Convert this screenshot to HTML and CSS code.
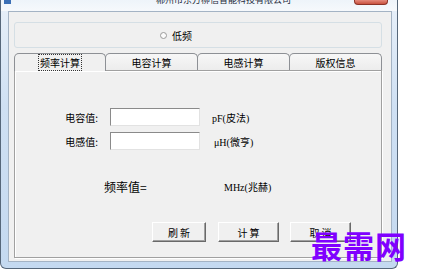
FILE: index.html
```html
<!DOCTYPE html>
<html lang="zh-CN">
<head>
    <meta charset="UTF-8">
    <title>频率计算</title>
    <link rel="stylesheet" href="styles.css">
</head>
<body>
    <div class="window">
        <div class="titlebar">
            <span class="app-icon"></span>
            <span class="title">郴州市东方柳信智能科技有限公司</span>
            <span class="close"></span>
        </div>
        <div class="client">
            <div class="group">
                <label class="radio"><span class="dot"></span>低频</label>
            </div>
            <div class="tabs">
                <div class="tab active"><span class="focus">频率计算</span></div>
                <div class="tab">电容计算</div>
                <div class="tab">电感计算</div>
                <div class="tab">版权信息</div>
            </div>
            <div class="panel">
                <div class="row">
                    <span class="label">电容值:</span>
                    <input type="text" class="field">
                    <span class="unit">pF(皮法)</span>
                </div>
                <div class="row second">
                    <span class="label">电感值:</span>
                    <input type="text" class="field">
                    <span class="unit mu">μH(微亨)</span>
                </div>
                <div class="result">
                    <span class="freq">频率值=</span>
                    <span class="unit">MHz(兆赫)</span>
                </div>
                <div class="buttons">
                    <button class="btn refresh">刷 新</button>
                    <button class="btn calc">计 算</button>
                    <button class="btn cancel">取 消</button>
                </div>
            </div>
        </div>
    </div>
    <div class="watermark">最需网</div>
</body>
</html>
```

FILE: styles.css
```css
body {
    margin: 0;
    background: #fff;
    font-family: "Noto Sans CJK SC", sans-serif;
    font-size: 10px;
    color: #000;
}
.window {
    width: 398px;
    height: 269px;
    box-sizing: border-box;
    display: flex;
    flex-direction: column;
    padding: 0 5px 6px 7px;
    background: linear-gradient(to bottom, #e8f0f9, #cfe0f3 40%, #c4d9f0);
    border: 1px solid #56677a;
    border-top: none;
    border-radius: 0 0 6px 6px;
}
.titlebar {
    height: 11px;
    margin: 0 -5px 0 -7px;
    display: flex;
    align-items: flex-start;
    overflow: hidden;
    background: linear-gradient(to bottom, #eef4fa, #f6f9fc);
}
.app-icon {
    width: 7px;
    height: 4px;
    margin-left: 3px;
    background: #3b6fb5;
}
.title {
    margin-left: 145px;
    margin-top: -5px;
    font-size: 9px;
    line-height: 9px;
    color: #1e2a3a;
    white-space: nowrap;
}
.close {
    margin-left: auto;
    margin-right: 9px;
    width: 34px;
    height: 5px;
    box-sizing: border-box;
    background: linear-gradient(to bottom, #e58a7c, #c9523f);
    border: 1px solid #8c3327;
    border-top: none;
    border-radius: 0 0 4px 4px;
}
.client {
    flex: 1;
    background: #f0f0f0;
    border: 1px solid #a4b3c4;
    padding: 10px 0 0 5px;
}
.group {
    width: 368px;
    height: 26px;
    box-sizing: border-box;
    border: 1px solid #d5dfe5;
    border-radius: 3px;
    display: flex;
    align-items: center;
    padding-left: 145px;
}
.radio {
    display: flex;
    align-items: center;
    gap: 5px;
}
.dot {
    width: 7px;
    height: 7px;
    box-sizing: border-box;
    border: 1px solid #9a9a9a;
    border-radius: 50%;
    background: #fbfbfb;
}
.tabs {
    display: flex;
    margin-top: 5px;
    height: 17px;
    position: relative;
    z-index: 1;
}
.tab {
    width: 93px;
    height: 17px;
    box-sizing: border-box;
    margin-right: -1px;
    border: 1px solid #8d9095;
    border-bottom: none;
    border-radius: 5px 5px 0 0;
    background: linear-gradient(to bottom, #f7f7f7, #ececec);
    display: flex;
    align-items: center;
    justify-content: center;
}
.tab.active {
    width: 92px;
    height: 18px;
    background: #f0f0f0;
    padding-bottom: 1px;
}
.focus {
    outline: 1px dotted #333;
    outline-offset: 0;
    padding: 0 1px;
}
.panel {
    width: 368px;
    height: 188px;
    box-sizing: border-box;
    border: 1px solid #a0a0a0;
    box-shadow: inset 1px 1px 0 #fff, 1px 1px 0 #fff;
    padding-top: 37px;
}
.row {
    display: flex;
    align-items: center;
    height: 18px;
}
.row.second {
    margin-top: 6px;
}
.label {
    width: 83px;
    margin-right: 12px;
    text-align: right;
}
.field {
    width: 90px;
    height: 18px;
    box-sizing: border-box;
    margin: 0;
    border: 1px solid;
    border-color: #8a8a8a #e2e2e2 #e2e2e2 #8a8a8a;
    background: #fff;
}
.unit {
    margin-left: 12px;
    font-family: "Liberation Serif", "Noto Sans CJK SC", serif;
}
.unit.mu {
    margin-left: 14px;
}
.result {
    display: flex;
    align-items: center;
    height: 14px;
    margin-top: 29px;
    padding-left: 89px;
}
.freq {
    width: 120px;
    font-size: 12px;
}
.result .unit {
    margin-left: 0;
}
.buttons {
    display: flex;
    margin-top: 29px;
    padding-left: 137px;
}
.btn {
    height: 20px;
    width: 61px;
    padding: 0;
    font-family: "Noto Sans CJK SC", sans-serif;
    font-size: 10px;
    background: #f0f0f0;
    border: 1px solid;
    border-color: #fff #696969 #696969 #fff;
    box-shadow: inset -1px -1px 0 #a0a0a0;
}
.btn.refresh {
    width: 54px;
    margin-right: 12px;
}
.btn.calc {
    margin-right: 11px;
}
.watermark {
    position: absolute;
    left: 311px;
    top: 229px;
    font-size: 31px;
    line-height: 1;
    font-weight: bold;
    color: #8000ff;
    letter-spacing: 1px;
}
```
